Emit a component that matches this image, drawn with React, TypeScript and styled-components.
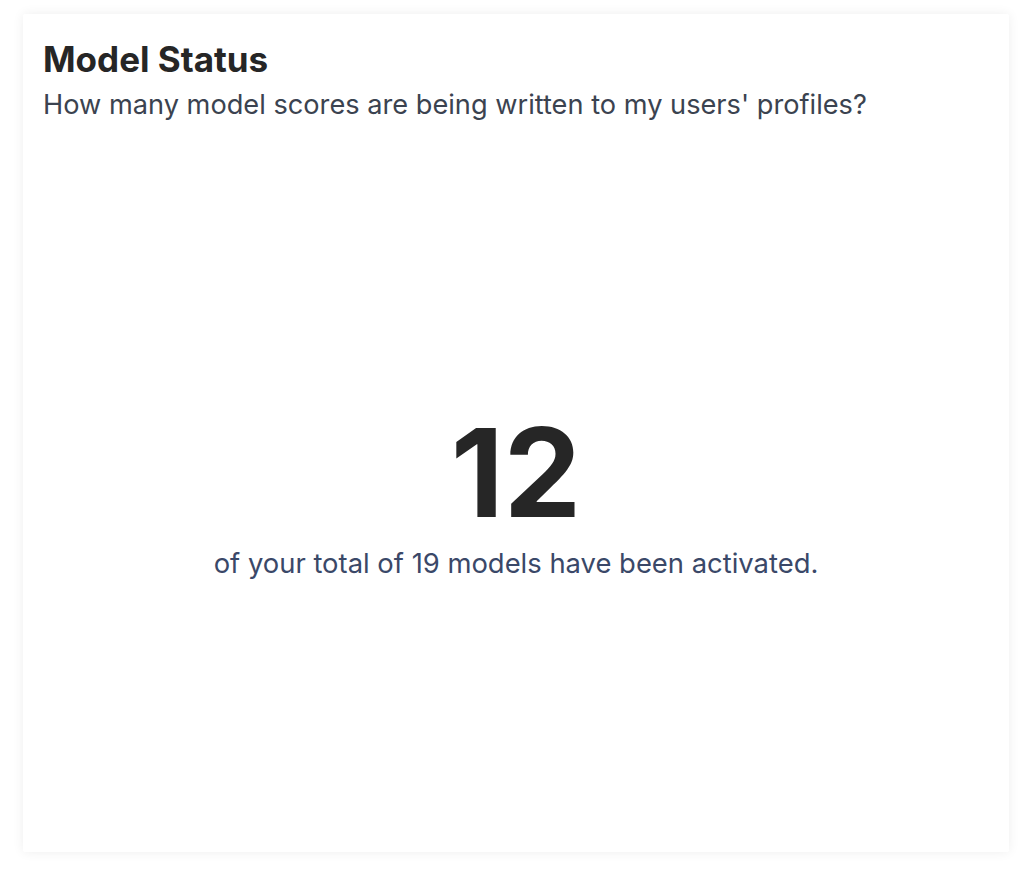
import React from "react";
import styled, { createGlobalStyle } from "styled-components";

const Global = createGlobalStyle`
  html, body { margin: 0; padding: 0; background: #ffffff; }
  body { font-family: Inter, "Noto Sans", sans-serif; }
  #root { padding: 14px 19px 22px 23px; box-sizing: border-box; height: 874px; display: flex; }
`;

const Card = styled.section`
  flex: 1;
  background: #ffffff;
  box-shadow: 0 0 12px rgba(0, 0, 0, 0.07);
  border-radius: 2px;
  padding: 24px 20px 22px;
  display: flex;
  flex-direction: column;
  box-sizing: border-box;
`;

const Title = styled.h2`
  margin: 0;
  font-size: 35px;
  font-weight: 700;
  color: #262626;
  line-height: 42px;
`;

const Subtitle = styled.p`
  margin: 7px 0 0;
  font-size: 27.2px;
  color: #3b4350;
  line-height: 35px;
`;

const Body = styled.div`
  flex: 1;
  display: flex;
  flex-direction: column;
  align-items: center;
  justify-content: center;
  padding-top: 38px;
`;

const BigNumber = styled.div`
  font-size: 123px;
  font-weight: 700;
  color: #262626;
  line-height: 1;
`;

const Caption = styled.div`
  font-size: 27.4px;
  color: #3a4868;
  margin-top: 12px;
`;

export default function App() {
  return (
    <>
      <Global />
      <Card>
        <Title>Model Status</Title>
        <Subtitle>How many model scores are being written to my users' profiles?</Subtitle>
        <Body>
          <BigNumber>12</BigNumber>
          <Caption>of your total of 19 models have been activated.</Caption>
        </Body>
      </Card>
    </>
  );
}
